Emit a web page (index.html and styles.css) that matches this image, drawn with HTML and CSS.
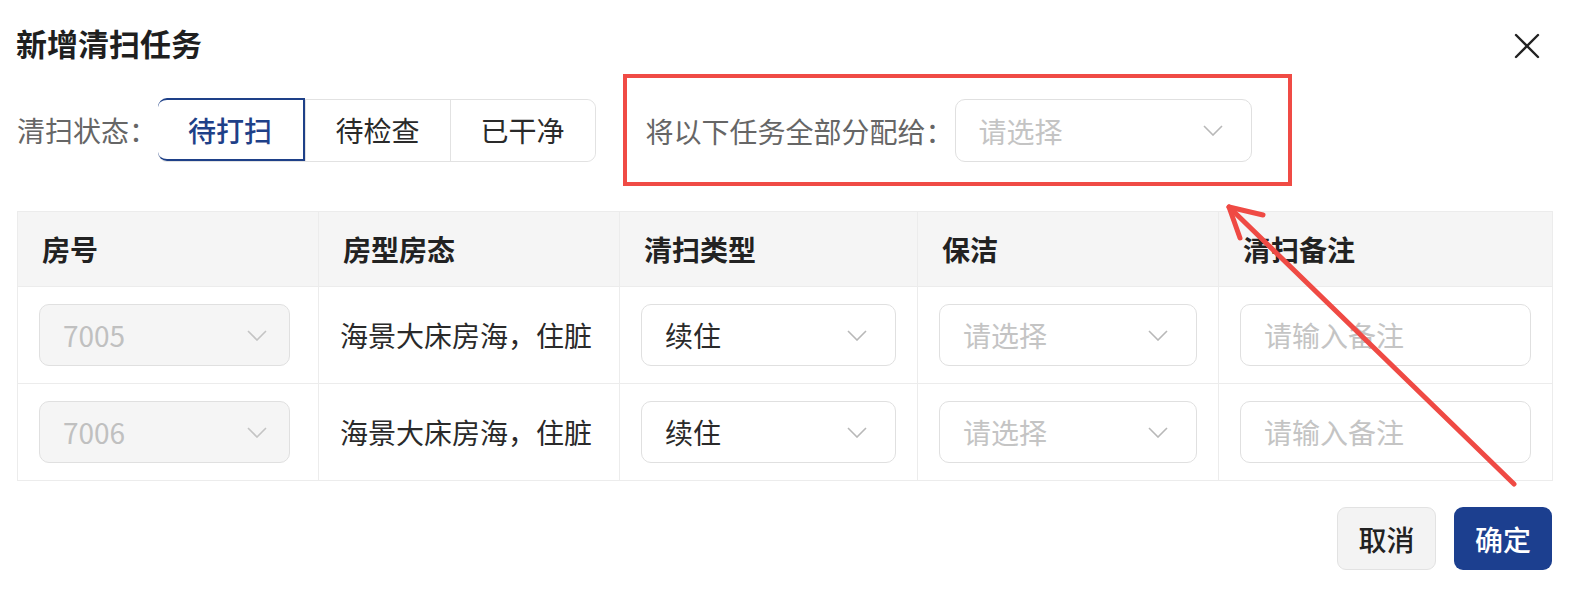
FILE: index.html
```html
<!DOCTYPE html>
<html lang="zh-CN">
<head>
<meta charset="utf-8">
<title>新增清扫任务</title>
<link rel="stylesheet" href="styles.css">
</head>
<body>
<div class="dialog">
  <div class="dialog-header">
    <h1 class="dialog-title">新增清扫任务</h1>
    <button class="close-btn" aria-label="关闭">
      <svg width="28" height="28" viewBox="0 0 28 28"><path d="M3 3 L25 25 M25 3 L3 25" stroke="#222" stroke-width="2.4" stroke-linecap="round" fill="none"/></svg>
    </button>
  </div>

  <div class="form-row">
    <span class="form-label status-label">清扫状态：</span>
    <div class="segmented">
      <button class="seg seg-active">待打扫</button>
      <button class="seg">待检查</button>
      <button class="seg">已干净</button>
    </div>
    <div class="assign-group">
      <span class="form-label assign-label">将以下任务全部分配给：</span>
      <div class="select select-assign">
        <span class="placeholder">请选择</span>
        <svg class="chev" width="20" height="11" viewBox="0 0 20 11"><path d="M1 1 L10 10 L19 1" stroke="#b8b8b8" stroke-width="1.6" fill="none"/></svg>
      </div>
    </div>
  </div>

  <table class="task-table">
    <colgroup>
      <col style="width:301px"><col style="width:301px"><col style="width:298px"><col style="width:301px"><col style="width:334px">
    </colgroup>
    <thead>
      <tr><th>房号</th><th>房型房态</th><th>清扫类型</th><th>保洁</th><th>清扫备注</th></tr>
    </thead>
    <tbody>
      <tr>
        <td><div class="select select-disabled"><span class="disabled-text">7005</span><svg class="chev" width="20" height="11" viewBox="0 0 20 11"><path d="M1 1 L10 10 L19 1" stroke="#c4c4c4" stroke-width="1.6" fill="none"/></svg></div></td>
        <td class="room-text">海景大床房海，住脏</td>
        <td><div class="select"><span class="value">续住</span><svg class="chev" width="20" height="11" viewBox="0 0 20 11"><path d="M1 1 L10 10 L19 1" stroke="#b8b8b8" stroke-width="1.6" fill="none"/></svg></div></td>
        <td><div class="select"><span class="placeholder">请选择</span><svg class="chev" width="20" height="11" viewBox="0 0 20 11"><path d="M1 1 L10 10 L19 1" stroke="#b8b8b8" stroke-width="1.6" fill="none"/></svg></div></td>
        <td><div class="select input"><span class="placeholder">请输入备注</span></div></td>
      </tr>
      <tr>
        <td><div class="select select-disabled"><span class="disabled-text">7006</span><svg class="chev" width="20" height="11" viewBox="0 0 20 11"><path d="M1 1 L10 10 L19 1" stroke="#c4c4c4" stroke-width="1.6" fill="none"/></svg></div></td>
        <td class="room-text">海景大床房海，住脏</td>
        <td><div class="select"><span class="value">续住</span><svg class="chev" width="20" height="11" viewBox="0 0 20 11"><path d="M1 1 L10 10 L19 1" stroke="#b8b8b8" stroke-width="1.6" fill="none"/></svg></div></td>
        <td><div class="select"><span class="placeholder">请选择</span><svg class="chev" width="20" height="11" viewBox="0 0 20 11"><path d="M1 1 L10 10 L19 1" stroke="#b8b8b8" stroke-width="1.6" fill="none"/></svg></div></td>
        <td><div class="select input"><span class="placeholder">请输入备注</span></div></td>
      </tr>
    </tbody>
  </table>

  <div class="actions">
    <button class="btn btn-cancel">取消</button>
    <button class="btn btn-primary">确定</button>
  </div>

  <svg class="annotation-arrow" width="1582" height="590" viewBox="0 0 1582 590">
    <g stroke="#ef4a44" stroke-width="5" stroke-linecap="round" stroke-linejoin="round" fill="none">
      <path d="M1514 484 L1229 207"/>
      <path d="M1263 215 L1229 207 L1240 238"/>
    </g>
  </svg>
</div>
</body>
</html>
```

FILE: styles.css
```css
* { box-sizing: border-box; }

html, body {
  margin: 0;
  padding: 0;
  background: #ffffff;
}

body {
  font-family: "Noto Sans CJK SC", "Noto Sans", sans-serif;
  color: #222;
  width: 1582px;
  height: 590px;
  overflow: hidden;
}

.dialog {
  position: relative;
  padding: 21px 30px 0 17px;
}

.dialog-header {
  display: flex;
  align-items: center;
  justify-content: space-between;
  height: 44px;
}

.dialog-title {
  margin: 0 0 0 -1px;
  font-size: 31px;
  line-height: 44px;
  font-weight: 600;
  color: #1f1f1f;
}

.close-btn {
  border: 0;
  background: transparent;
  padding: 0;
  margin: 6px 11px 0 0;
  width: 28px;
  height: 28px;
  display: flex;
}

.form-row {
  display: flex;
  align-items: center;
  margin-top: 9px;
}

.form-label {
  font-size: 28px;
  line-height: 40px;
  color: #666;
  white-space: nowrap;
}

.status-label {
  width: 141px;
}

.segmented {
  display: flex;
  height: 63px;
  border: 1.5px solid #e2e2e2;
  border-radius: 9px;
  margin-right: 27px;
}

.seg {
  width: 145px;
  height: 100%;
  border: 0;
  border-left: 1.5px solid #e2e2e2;
  background: #fff;
  font-family: inherit;
  font-size: 28px;
  color: #2a2a2a;
  padding: 0;
}

.seg:first-child { border-left: 0; }
.seg:last-child { border-radius: 0 9px 9px 0; }

.seg-active {
  border: 2px solid #1e4088;
  border-radius: 9px 0 0 9px;
  margin: -1.5px 0 -1.5px -1.5px;
  height: 63px;
  width: 147px;
  color: #1e4088;
  font-weight: 500;
}

.assign-group {
  display: flex;
  align-items: center;
  border: 4px solid #f04b45;
  padding: 21px 36px 20px 19px;
}

.assign-label {
  width: 309px;
}

.select {
  display: flex;
  align-items: center;
  justify-content: space-between;
  height: 62px;
  border: 1.5px solid #e0e0e0;
  border-radius: 10px;
  background: #fff;
  padding: 0 28px 0 23px;
  font-size: 28px;
}

.select-assign {
  width: 297px;
  height: 63px;
}

.select .chev { flex: none; }

.placeholder { color: #c4c4c4; }
.value { color: #2a2a2a; }
.disabled-text { color: #c0c0c0; }

.select-disabled {
  background: #f5f5f5;
  width: 251px;
  padding-right: 22px;
}

.task-table {
  margin-top: 25px;
  width: 1535px;
  table-layout: fixed;
  border-collapse: collapse;
  border: 1.5px solid #ececec;
}

.task-table th,
.task-table td {
  border: 1.5px solid #ececec;
  text-align: left;
}

.task-table th {
  height: 75px;
  background: #f5f5f5;
  font-size: 28px;
  font-weight: 600;
  color: #222;
  padding: 0 24px;
}

.task-table td {
  height: 97px;
  padding: 0 21px;
}

.room-text {
  font-size: 28px;
  color: #2a2a2a;
  white-space: nowrap;
}

.actions {
  display: flex;
  justify-content: flex-end;
  gap: 18px;
  margin-top: 26px;
}

.btn {
  height: 63px;
  border-radius: 9px;
  font-family: inherit;
  font-size: 28px;
  font-weight: 500;
  padding: 0;
}

.btn-cancel {
  width: 99px;
  background: #f3f3f3;
  border: 1.5px solid #e2e2e2;
  color: #222;
}

.btn-primary {
  width: 98px;
  background: #1c3f8f;
  border: 0;
  color: #fff;
}

.annotation-arrow {
  position: absolute;
  left: 0;
  top: 0;
  pointer-events: none;
}
```
